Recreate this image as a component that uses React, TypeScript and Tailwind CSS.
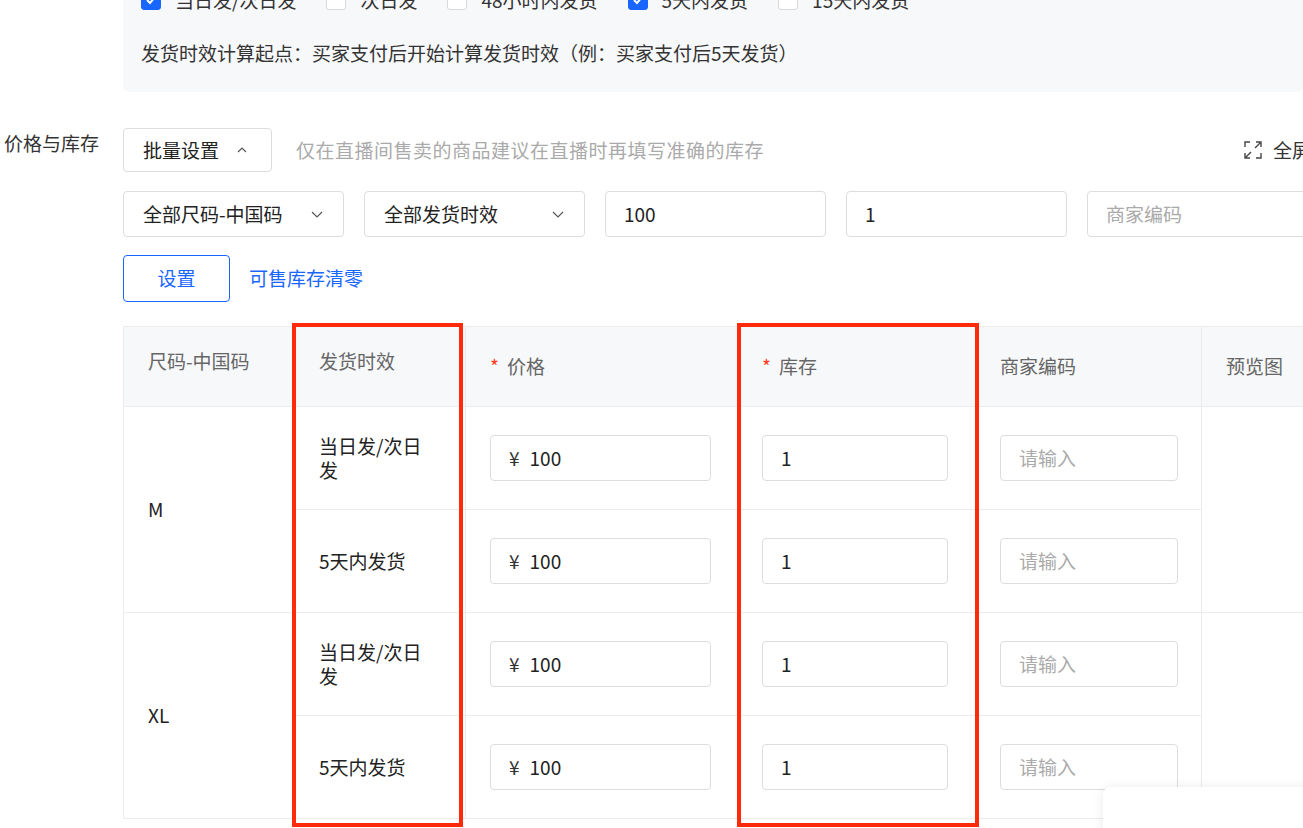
import React from "react";

const F = { fontFamily: '"Noto Sans CJK SC", "Noto Sans", sans-serif' };

function Check({ on, label }: { on?: boolean; label: string }) {
  return (
    <div className="flex items-center gap-[14px]">
      <div className={`w-[20px] h-[20px] rounded-[3px] border flex items-center justify-center ${on ? "bg-[#1966ff] border-[#1966ff]" : "bg-white border-[#d9d9d9]"}`}>
        {on && (
          <svg width="12" height="12" viewBox="0 0 12 12"><path d="M2 6l3 3 5-6" stroke="white" strokeWidth="2" fill="none" /></svg>
        )}
      </div>
      <span className="text-[19px] text-[#333]">{label}</span>
    </div>
  );
}

const Chevron = ({ up }: { up?: boolean }) => (
  <svg width="14" height="14" viewBox="0 0 14 14" className="text-[#555]">
    <path d={up ? "M3 9l4-4 4 4" : "M2 5l5 5 5-5"} stroke="currentColor" strokeWidth="1.2" fill="none" />
  </svg>
);

function Input({ w, value, ph, prefix }: { w: string; value?: string; ph?: string; prefix?: boolean }) {
  return (
    <div className={`${w} h-[46px] border border-[#dcdde0] rounded-[4px] bg-white flex items-center px-[18px] text-[19px]`}>
      {prefix && <span className="text-[#333] mr-[10px]">¥</span>}
      {value ? <span className="text-[#222]">{value}</span> : <span className="text-[#aaa]">{ph}</span>}
    </div>
  );
}

function TimeRow({ long }: { long: boolean }) {
  return (
    <>
      <td className="border-b border-r border-[#ececee] h-[103px] pl-[24px]">
        <div className="w-[112px] text-[19px] leading-[24px] text-[#222]">{long ? "当日发/次日发" : "5天内发货"}</div>
      </td>
      <td className="border-b border-r border-[#ececee] pl-[24px]"><Input w="w-[221px]" prefix value="100" /></td>
      <td className="border-b border-r border-[#ececee] pl-[24px]"><Input w="w-[186px]" value="1" /></td>
      <td className="border-b border-r border-[#ececee] pl-[22px]"><Input w="w-[178px]" ph="请输入" /></td>
    </>
  );
}

export default function App() {
  return (
    <div style={F} className="relative w-[1303px] h-[828px] overflow-hidden bg-white">
      <div className="ml-[123px] h-[92px] bg-[#f7f8fa] rounded-b-[6px] pl-[18px] flow-root">
        <div className="flex items-center gap-[30px] h-[22px] mt-[-11px]">
          <Check on label="当日发/次日发" />
          <Check label="次日发" />
          <Check label="48小时内发货" />
          <Check on label="5天内发货" />
          <Check label="15天内发货" />
        </div>
        <div className="mt-[28px] text-[19px] text-[#333] leading-[28px]">发货时效计算起点：买家支付后开始计算发货时效（例：买家支付后5天发货）</div>
      </div>

      <div className="flex mt-[36px]">
        <div className="w-[123px] shrink-0 text-right pr-[24px] text-[19px] text-[#333] whitespace-nowrap leading-[28px] mt-[1px]">价格与库存</div>
        <div className="flex-1 min-w-0">
          <div className="flex items-center h-[44px]">
            <div className="w-[149px] h-[44px] border border-[#dcdde0] rounded-[4px] flex items-center pl-[19px] gap-[16px] text-[19px] text-[#222]">
              批量设置 <Chevron up />
            </div>
            <div className="ml-[24px] text-[19px] text-[#aaa] tracking-[0.5px]">仅在直播间售卖的商品建议在直播时再填写准确的库存</div>
            <div className="ml-auto flex items-center gap-[10px] text-[19px] text-[#333] mr-[-8px] whitespace-nowrap">
              <svg width="20" height="20" viewBox="0 0 20 20" fill="none" stroke="#444" strokeWidth="1.4">
                <path d="M2 7V2h5M13 2h5v5M18 13v5h-5M7 18H2v-5M12 8l5-5M8 12l-5 5" />
              </svg>
              <span>全屏</span>
            </div>
          </div>

          <div className="flex gap-[20px] mt-[19px]">
            <div className="w-[221px] shrink-0 h-[46px] border border-[#dcdde0] rounded-[4px] flex items-center justify-between px-[19px] text-[19px] text-[#222]">全部尺码-中国码 <Chevron /></div>
            <div className="w-[221px] shrink-0 h-[46px] border border-[#dcdde0] rounded-[4px] flex items-center justify-between px-[19px] text-[19px] text-[#222]">全部发货时效 <Chevron /></div>
            <Input w="w-[221px] shrink-0" value="100" />
            <Input w="w-[221px] shrink-0" value="1" />
            <Input w="w-[240px] shrink-0" ph="商家编码" />
          </div>

          <div className="flex items-center mt-[18px] gap-[19px]">
            <div className="w-[107px] h-[47px] border-[1.5px] border-[#1966ff] rounded-[4px] flex items-center justify-center text-[19px] text-[#1966ff]">设置</div>
            <span className="text-[19px] text-[#1966ff]">可售库存清零</span>
          </div>

          <table className="mt-[24px] border-collapse border-l border-t border-[#ececee] table-fixed" style={{ width: 1220 }}>
            <colgroup>
              <col style={{ width: 171 }} /><col style={{ width: 171 }} /><col style={{ width: 272 }} /><col style={{ width: 240 }} /><col style={{ width: 224 }} /><col />
            </colgroup>
            <thead>
              <tr className="bg-[#f7f8fa] h-[80px] text-[19px] text-[#666] text-left">
                <th className="font-normal border-b border-r border-[#ececee] pl-[24px] pb-[10px]">尺码-中国码</th>
                <th className="font-normal border-b border-r border-[#ececee] pl-[24px] pb-[10px]">发货时效</th>
                <th className="font-normal border-b border-r border-[#ececee] pl-[24px]"><span className="text-[#ff3b1f] mr-[8px]">*</span>价格</th>
                <th className="font-normal border-b border-r border-[#ececee] pl-[24px]"><span className="text-[#ff3b1f] mr-[8px]">*</span>库存</th>
                <th className="font-normal border-b border-r border-[#ececee] pl-[22px]">商家编码</th>
                <th className="font-normal border-b border-r border-[#ececee] pl-[24px]">预览图</th>
              </tr>
            </thead>
            <tbody>
              {["M", "XL"].map((s) => (
                <React.Fragment key={s}>
                  <tr>
                    <td rowSpan={2} className="border-b border-r border-[#ececee] pl-[24px] text-[19px] text-[#222]">{s}</td>
                    <TimeRow long />
                    <td rowSpan={2} className="border-b border-r border-[#ececee]"></td>
                  </tr>
                  <tr><TimeRow long={false} /></tr>
                </React.Fragment>
              ))}
            </tbody>
          </table>
        </div>
      </div>

      <div className="absolute left-[292px] top-[323px] w-[171px] h-[504px] border-[4px] border-[#ff2a0a]"></div>
      <div className="absolute left-[737px] top-[323px] w-[242px] h-[504px] border-[4px] border-[#ff2a0a]"></div>
      <div className="absolute left-[1103px] top-[787px] w-[220px] h-[60px] bg-white rounded-[8px] shadow-[0_0_12px_rgba(0,0,0,0.08)]"></div>
    </div>
  );
}
